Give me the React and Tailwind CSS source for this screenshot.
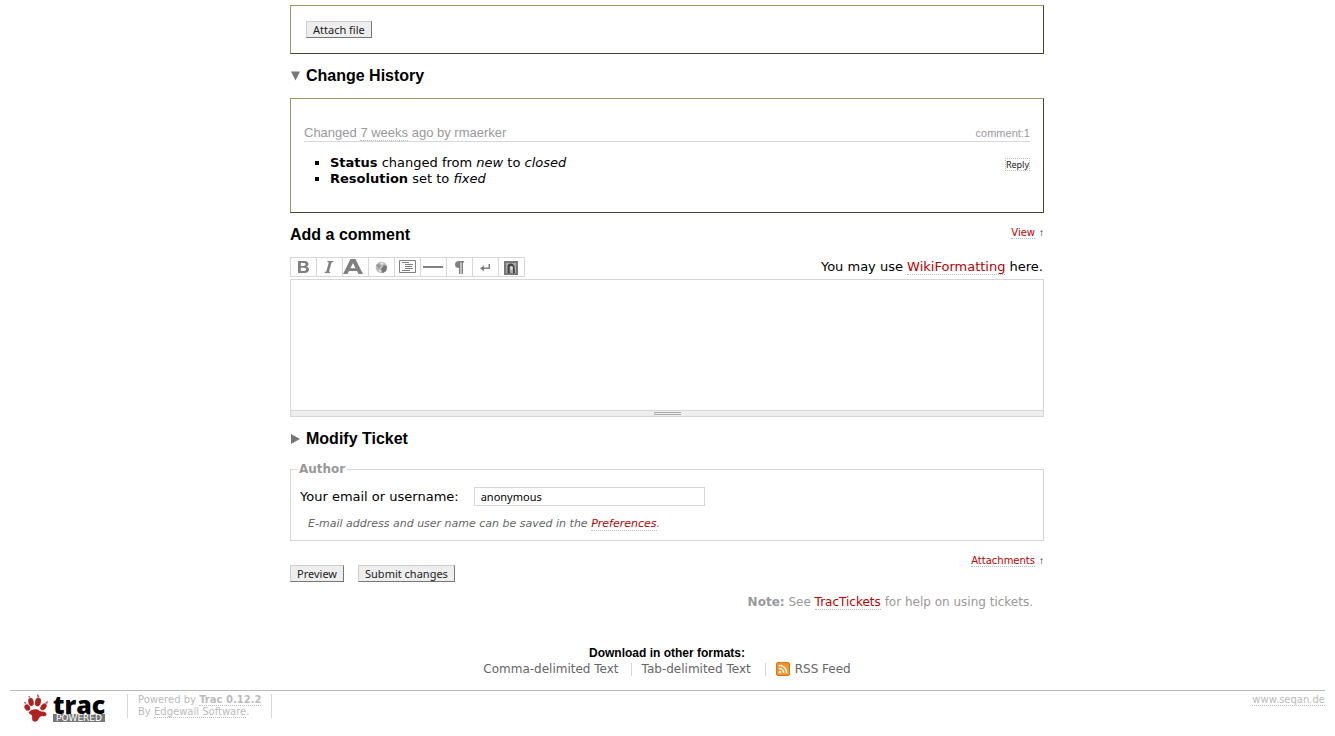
import React from "react";

const btn =
  "h-[17px] border border-t-[#ccc] border-l-[#ccc] border-r-[#777] border-b-[#777] bg-[#eee] px-[6px] font-['Noto_Sans','Open_Sans',sans-serif] text-[11px] leading-[15px] text-[#222]";

const box = "border border-t-[#996] border-l-[#996] border-r-[#443] border-b-[#443]";

const h2 = "font-['Liberation_Sans',Arial,sans-serif] text-[16px] leading-5 font-bold text-black";

function Link({ children, className = "text-[#b00]" }) {
  return (
    <a href="#" className={`border-b border-dotted border-[#bbb] ${className}`}>
      {children}
    </a>
  );
}

function UpLink({ children }) {
  return (
    <p className="text-[10px]">
      <Link>{children}</Link>
      <span className="ml-[4px] font-['Liberation_Sans',Arial,sans-serif] font-bold">↑</span>
    </p>
  );
}

const tools = [
  {
    name: "Bold text",
    art: <path fillRule="evenodd" d="M7 3 H13 C16.500 3 17.500 4.500 17.500 6 C17.500 7.500 16.500 8.300 15.500 8.600 C17 9 18 10 18 11.500 C18 14 16 15 13.500 15 H7Z M9.800 5 V7.900 H12.500 C15.200 7.900 15.200 5 12.500 5Z M9.800 9.800 V13 H12.800 C15.800 13 15.800 9.800 12.800 9.800Z" />,
  },
  {
    name: "Italic text",
    art: <path d="M10.500 3 H16.500 L16.300 4 L14.500 4.400 L12 13.600 L13.300 14 L13 15 H7.500 L7.700 14 L9.300 13.600 L11.800 4.400 L10.300 4Z" />,
  },
  {
    name: "Heading",
    art: <path d="M0 16 L7.500 1 H12.500 L20 16 H15.500 L14 13 H6 L4.500 16Z M7.500 10.200 H12.500 L10 5Z" fillRule="evenodd" />,
  },
  {
    name: "Link",
    art: (
      <>
        <circle cx="12.500" cy="9.500" r="5.800" fill="#bbb" />
        <path d="M7 7 L10 5.500 L12 8 L10 11Z" fill="#999" />
        <path d="M11 13 L15 7 L18 8.500 L17 13 L14 15Z" fill="#777" />
        <path d="M11 5 L15 4.500 L13 7Z" fill="#eee" />
        <path d="M9 12 L13 12.500 L12 14.500Z" fill="#eee" />
      </>
    ),
  },
  {
    name: "Code block",
    art: (
      <path
        d="M4.500 2.500 H20.500 V14.500 H4.500Z M7 4.500 H14 M10 6.500 H18 M10 8.500 H17 M10 10.500 H18 M7 12.500 H15"
        fill="none"
        stroke="#808080"
      />
    ),
  },
  { name: "Horizontal rule", art: <rect x="2" y="8" width="20" height="2" /> },
  {
    name: "New paragraph",
    art: <path d="M17 3 H12 A4 3.500 0 0 0 12 10 V16 H13.500 V4.500 H14.500 V16 H16 V4.500 H17Z" />,
  },
  {
    name: "Line break",
    art: <path d="M15.500 6 H17 V11 H11 V13.500 L7 10.200 L11 7.200 V9.500 H15.500Z" />,
  },
  {
    name: "Image",
    art: (
      <>
        <rect x="6" y="4" width="12" height="12" fill="#aaa" stroke="#777" strokeWidth="2" />
        <path d="M8.500 15 V8 Q9 5.500 12 5.500 Q15.500 6 15.500 9 L16 15 H14 L14 12 L14 8.500 L11 8 L10.500 12 L11 15Z" fill="#444" />
        <path d="M11 8.500 H13.500 V11 L12 12.500Z" fill="#ddd" />
      </>
    ),
  },
];

function TracLogo() {
  return (
    <span className="flex h-[28px] items-start gap-[5px]">
      <svg className="block" width="24" height="28" viewBox="0 0 24 28" aria-hidden="true">
        <g fill="#b02222">
          <path d="M5 18 C7 15.500 11 15 13.500 15.500 C15 16 15 17 17 17.500 C19.500 17.500 22.500 18 22.500 20.500 C22.500 22 20.500 22.500 18.500 22 C16.500 22 15.500 23 14.500 25 C13.500 27.500 11 28.500 9 27 C7.500 25.500 8.500 23.500 8 21.500 C7.500 20 4 20 5 18Z" />
          <ellipse cx="3.300" cy="13.500" rx="2.700" ry="3.400" transform="rotate(-30 3.300 13.500)" />
          <ellipse cx="7" cy="8" rx="2.700" ry="4" transform="rotate(-12 7 8)" />
          <ellipse cx="14" cy="8" rx="2.900" ry="4.400" transform="rotate(12 14 8)" />
          <ellipse cx="19.500" cy="12.800" rx="2.600" ry="3.800" transform="rotate(40 19.500 12.800)" />
          <path d="M0 9 L1 7.500 L2.500 10Z M4.500 3.500 L4.800 1.500 L6.500 3.500Z M13 2.500 L13.500 0 L15.500 3Z M21 9.500 L23.500 6.500 L23.500 9.500Z" />
        </g>
      </svg>
      <span className="flex w-[52px] flex-col">
        <span className="flex h-[20px] items-center font-['Open_Sans',sans-serif] text-[25px] leading-[18px] font-extrabold text-black">trac</span>
        <span className="block h-[8px] bg-[#777] text-center font-['DejaVu_Sans',sans-serif] text-[9px] leading-[8px] text-white">POWERED</span>
      </span>
    </span>
  );
}

function RssIcon() {
  return (
    <svg width="14" height="14" viewBox="0 0 14 14" aria-hidden="true">
      <rect x="0.500" y="0.500" width="13" height="13" rx="1.500" fill="#f5922a" stroke="#d97416" />
      <circle cx="4" cy="10.200" r="1.300" fill="#fff" />
      <path d="M2.800 6.200 A5 5 0 0 1 7.800 11.300 M2.800 3.200 A8 8 0 0 1 10.800 11.300" fill="none" stroke="#fff" strokeWidth="1.500" />
    </svg>
  );
}

export default function App() {
  return (
    <div className="bg-white font-[Verdana,'DejaVu_Sans',sans-serif] text-[13px] leading-4 text-black">
      <main className="pt-[5px] pr-px">
        <div className="mx-auto max-w-[754px]">
          <div className={`${box} px-[15px] py-[15px]`}>
            <button type="button" className={`block ${btn}`}>Attach file</button>
          </div>

          <h2 className={`${h2} mt-3 flex items-center gap-[5px]`}>
            <svg width="11" height="10" viewBox="0 0 11 10" aria-hidden="true">
              <path d="M1 0.500 H10 L5.500 9.500Z" fill="#777" />
            </svg>
            Change History
          </h2>

          <section className={`${box} mt-3 px-[13px] pt-[26px] pb-[25px]`}>
            <h3 className="flex items-baseline justify-between border-b border-[#d7d7d7] font-['Liberation_Sans',Arial,sans-serif] leading-[15px] text-[#999]">
              <span>
                Changed <Link className="text-[#999]">7 weeks</Link> ago by rmaerker
              </span>
              <a href="#" className="text-[11px]">comment:1</a>
            </h3>
            <div className="mt-[13px] flex items-start justify-between">
              <ul className="list-[square] pl-[26px]">
                <li><strong>Status</strong> changed from <em>new</em> to <em>closed</em></li>
                <li><strong>Resolution</strong> set to <em>fixed</em></li>
              </ul>
              <button type="button" className="mt-[3px] border border-dotted border-[#bbb] font-['Noto_Sans',sans-serif] text-[9px] leading-[11px] text-[#222]">
                Reply
              </button>
            </div>
          </section>

          <div className="mt-3 flex items-start justify-between">
            <h2 className={h2}><label htmlFor="comment">Add a comment</label></h2>
            <UpLink>View</UpLink>
          </div>

          <div className="mt-3 flex items-center justify-between">
            <div className="flex border-t border-l border-[#d7d7d7]" role="toolbar" aria-label="Formatting">
              {tools.map((t) => (
                <button key={t.name} type="button" aria-label={t.name} className="h-[19px] w-[26px] border-r border-b border-[#d7d7d7]">
                  <svg className="block" width="25" height="18" viewBox="0 0 25 18" fill="#808080">{t.art}</svg>
                </button>
              ))}
            </div>
            <p className="pr-px">You may use <Link>WikiFormatting</Link> here.</p>
          </div>

          <textarea id="comment" className="mt-[2px] block h-[132px] w-full resize-none border border-[#d7d7d7] px-1 outline-none" />
          <div className="flex h-[6px] flex-col items-center justify-center gap-px border border-t-0 border-[#d7d7d7] bg-[#eee]">
            <span className="h-px w-[27px] bg-[#aaa]" />
            <span className="h-px w-[27px] bg-[#aaa]" />
          </div>

          <h2 className={`${h2} mt-3 flex items-center gap-[5px]`}>
            <svg width="11" height="10" viewBox="0 0 11 10" aria-hidden="true">
              <path d="M1 0 L10 5 L1 10Z" fill="#777" />
            </svg>
            Modify Ticket
          </h2>

          <fieldset className="mt-3 border border-[#d7d7d7] px-[9px] pb-[8px]">
            <legend className="-ml-[3px] px-[2px] text-[12px] font-bold text-[#999]">Author</legend>
            <div className="mt-[10px] flex items-center gap-[15px]">
              <label htmlFor="author">Your email or username:</label>
              <input id="author" type="text" defaultValue="anonymous" className="h-[19px] w-[231px] border border-[#d7d7d7] px-[6px] font-['Noto_Sans',sans-serif] text-[11px] outline-none" />
            </div>
            <p className="mt-[10px] pl-2 text-[11px] text-[#666] italic">
              E-mail address and user name can be saved in the <Link>Preferences</Link>.
            </p>
          </fieldset>

          <div className="mt-3 flex items-start justify-between">
            <div className="mt-3 flex gap-[14px]">
              <button type="submit" className={btn}>Preview</button>
              <button type="submit" className={btn}>Submit changes</button>
            </div>
            <UpLink>Attachments</UpLink>
          </div>

          <p className="mt-3 pr-[11px] text-right text-[12px] text-[#999]">
            <strong>Note:</strong> See <Link>TracTickets</Link> for help on using tickets.
          </p>

          <nav className="mt-[35px] flex flex-col items-center">
            <h3 className="font-['Liberation_Sans',Arial,sans-serif] text-[12px] font-bold">Download in other formats:</h3>
            <ul className="flex items-center text-[12px] text-[#666]">
              <li className="flex h-[13px] items-center border-r border-[#d7d7d7] pr-[12px]"><a href="#">Comma-delimited Text</a></li>
              <li className="flex h-[13px] items-center border-r border-[#d7d7d7] pr-[14px] pl-[10px]"><a href="#">Tab-delimited Text</a></li>
              <li className="pl-[10px]"><a href="#" className="flex items-center gap-[5px]"><RssIcon />RSS Feed</a></li>
            </ul>
          </nav>
        </div>
      </main>

      <footer className="mx-[10px] mt-[13px] flex items-start border-t border-[#bbb] pt-[3px] text-[10px] leading-3 text-[#bbb]">
        <a href="#" className="ml-[14px]"><TracLogo /></a>
        <p className="ml-[22px] border-x border-[#d7d7d7] px-[10px]">
          Powered by <Link className="font-bold text-[#bbb]">Trac 0.12.2</Link>
          <br />
          By <Link className="text-[#bbb]">Edgewall Software</Link>.
        </p>
        <p className="ml-auto"><Link className="text-[#bbb]">www.seqan.de</Link></p>
      </footer>
    </div>
  );
}
